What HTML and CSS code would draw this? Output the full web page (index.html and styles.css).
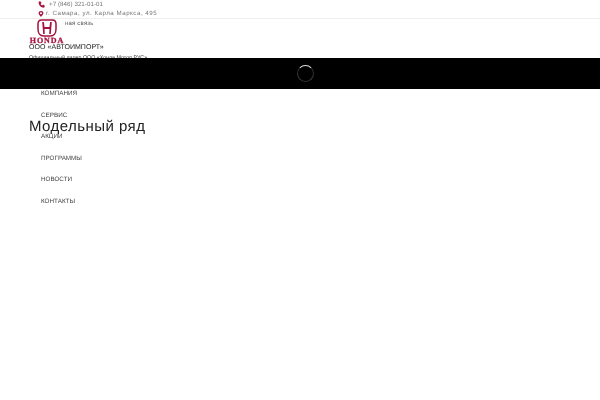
FILE: index.html
```html
<!DOCTYPE html>
<html lang="ru">
<head>
  <meta charset="UTF-8" />
  <meta name="viewport" content="width=device-width, initial-scale=1.0"/>
  <title>ООО «АВТОИМПОРТ»</title>
  <link rel="stylesheet" href="styles.css">
</head>
<body>
  <div class="topbar">
    <div class="contact">
      <svg class="contact-icon" viewBox="0 0 10 10"><path d="M9.8 7.2 7.4 5 5.8 6.6C5 6.1 4.2 5.2 3.7 4.3L5.2 2.7 3.2.2.9 1.2C.5 5.8 4 9.6 8.7 9.7Z" fill="#a5123f"/></svg>
      <span class="phone">+7 (846) 321-01-01</span>
    </div>
    <div class="contact">
      <svg class="contact-icon marker" viewBox="0 0 10 10"><path fill-rule="evenodd" d="M5 .2C2.6.2 1 1.7 1 3.8 1 6 5 9.8 5 9.8S9 6 9 3.8C9 1.7 7.4.2 5 .2ZM5 2.2A1.7 1.7 0 1 1 5 5.6 1.7 1.7 0 0 1 5 2.2Z" fill="#a5123f"/></svg>
      <span class="address">г. Самара, ул. Карла Маркса, 495</span>
    </div>
  </div>

  <header class="brand">
    <div class="logo-row">
      <div class="logo">
        <svg class="logo-mark" viewBox="0 0 20 18">
          <path d="M4.5 1H15.5C18 1 19 2.5 19 5V10C19 14 17 17 13.5 17H6.5C3 17 1 14 1 10V5C1 2.5 2 1 4.5 1Z" fill="none" stroke="#a5123f" stroke-width="1.5"/>
          <path d="M5.2 3H6.9L7.5 8H12.5L13.1 3H14.8L13.8 15H12.2L12.5 10H7.5L7.8 15H6.2Z" fill="#a5123f"/>
        </svg>
        <span class="logo-word">HONDA</span>
      </div>
      <a class="feedback">ная связь</a>
    </div>
    <div class="company">ООО «АВТОИМПОРТ»</div>
    <div class="dealer">Официальный дилер ООО «Хонда Мотор РУС»</div>
  </header>

  <div class="loader">
    <div class="spinner"></div>
  </div>

  <nav class="menu">
    <a>КОМПАНИЯ</a>
    <a>СЕРВИС</a>
    <a>АКЦИИ</a>
    <a>ПРОГРАММЫ</a>
    <a>НОВОСТИ</a>
    <a>КОНТАКТЫ</a>
  </nav>

  <h1 class="page-title">Модельный ряд</h1>
</body>
</html>
```

FILE: styles.css
```css
* {
  box-sizing: border-box;
  margin: 0;
  padding: 0;
}

body {
  font-family: "Liberation Sans", sans-serif;
  text-rendering: geometricPrecision;
  background: #fff;
  color: #333;
  height: 400px;
  overflow: hidden;
  position: relative;
  filter: blur(0.3px);
}

.topbar {
  height: 19px;
  padding-left: 38px;
  border-bottom: 1px solid #eee;
  font-size: 6.2px;
  color: #777;
}

.contact {
  display: flex;
  align-items: center;
  gap: 2px;
  height: 9px;
}

.contact-icon {
  width: 7px;
  height: 7px;
}

.marker {
  width: 6px;
  height: 6px;
}

.phone {
  margin-left: 2px;
  letter-spacing: 0.05px;
}

.address {
  letter-spacing: 0.5px;
}

.brand {
  padding-left: 29px;
}

.logo-row {
  display: flex;
  height: 23px;
}

.logo {
  width: 36px;
  display: flex;
  flex-direction: column;
  align-items: center;
}

.logo-mark {
  width: 20px;
  height: 18px;
  flex-shrink: 0;
}

.logo-word {
  font-family: "Liberation Serif", serif;
  font-size: 8px;
  font-weight: bold;
  letter-spacing: 0.9px;
  line-height: 7px;
  color: #a5123f;
  -webkit-text-stroke: 0.25px #a5123f;
}

.feedback {
  font-size: 6px;
  letter-spacing: 0.2px;
  color: #555;
  line-height: 7px;
  margin-top: 2px;
}

.company {
  font-size: 7px;
  letter-spacing: 0.05px;
  line-height: 9px;
  margin-top: 1px;
  color: #222;
}

.dealer {
  font-size: 5.3px;
  line-height: 8px;
  margin-top: 2px;
  color: #333;
}

.loader {
  position: absolute;
  left: 0;
  top: 58px;
  width: 100%;
  height: 31px;
  background: #000;
  display: flex;
  align-items: center;
  justify-content: center;
}

.spinner {
  width: 17px;
  height: 17px;
  margin-left: 10px;
  border-radius: 50%;
  border: 1px solid #333;
  border-top-color: #ddd;
}

.menu {
  display: flex;
  flex-direction: column;
  padding-left: 41px;
  margin-top: 27px;
  font-size: 6.3px;
  color: #444;
}

.menu a {
  height: 21.6px;
  line-height: 9px;
}

.page-title {
  position: absolute;
  left: 29px;
  top: 118px;
  font-size: 15px;
  line-height: 18px;
  font-weight: normal;
  letter-spacing: 0.45px;
  color: #222;
}
```
